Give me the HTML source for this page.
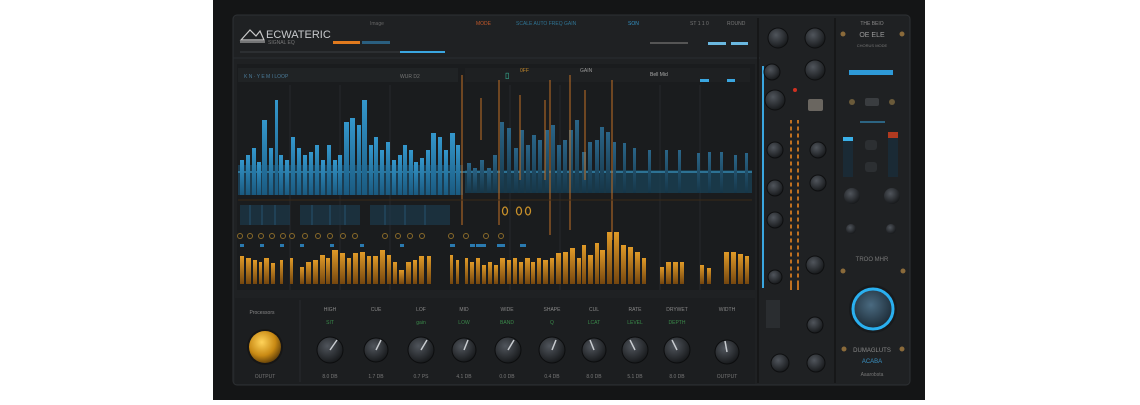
<!DOCTYPE html><html><head><style>body{margin:0;background:#fff;width:1140px;height:400px;overflow:hidden;font-family:"Liberation Sans",sans-serif}</style></head><body>
<svg width="1140" height="400" viewBox="0 0 1140 400" xmlns="http://www.w3.org/2000/svg" font-family="Liberation Sans, sans-serif">
<defs>
<linearGradient id="bl" x1="0" y1="0" x2="0" y2="1"><stop offset="0" stop-color="#3497cc"/><stop offset="1" stop-color="#1a5a80"/></linearGradient>
<linearGradient id="bd" x1="0" y1="0" x2="0" y2="1"><stop offset="0" stop-color="#2a6588"/><stop offset="1" stop-color="#163648"/></linearGradient>
<linearGradient id="or" x1="0" y1="0" x2="0" y2="1"><stop offset="0" stop-color="#e09a28"/><stop offset="1" stop-color="#74460f"/></linearGradient>
<radialGradient id="kn" cx="0.4" cy="0.35" r="0.7"><stop offset="0" stop-color="#50555c"/><stop offset="1" stop-color="#141618"/></radialGradient>
<radialGradient id="gd" cx="0.4" cy="0.35" r="0.7"><stop offset="0" stop-color="#ffd35a"/><stop offset="0.6" stop-color="#c98a14"/><stop offset="1" stop-color="#5a3a08"/></radialGradient>
<radialGradient id="bk" cx="0.45" cy="0.4" r="0.7"><stop offset="0" stop-color="#4a6a80"/><stop offset="1" stop-color="#14202a"/></radialGradient>
</defs>
<rect x="213" y="0" width="712" height="400" fill="#141516"/>
<rect x="233" y="15" width="677" height="370" rx="4" fill="#1f2123" stroke="#2e3134"/>
<line x1="233" y1="58" x2="760" y2="58" stroke="#2a2d30"/>
<line x1="835" y1="18" x2="835" y2="383" stroke="#161718" stroke-width="2"/>
<line x1="758" y1="18" x2="758" y2="383" stroke="#161718" stroke-width="2"/>
<path d="M241 40 L250 30 L256 36 L260 31 L264 40 Z" fill="none" stroke="#c9c9c9" stroke-width="1.2"/>
<line x1="240" y1="42" x2="265" y2="42" stroke="#c9c9c9"/>
<text x="266" y="38" font-size="11" fill="#c7c9cc">ECWATERIC</text>
<text x="268" y="44" font-size="5" fill="#777">SIGNAL EQ</text>
<rect x="333" y="41" width="27" height="3" fill="#e07a1e"/><rect x="362" y="41" width="28" height="3" fill="#2a5f80"/>
<rect x="400" y="51" width="45" height="2" fill="#3aa6e0"/><line x1="240" y1="52" x2="400" y2="52" stroke="#3a3d40"/>
<text x="370" y="25" font-size="5" fill="#666">Image</text><text x="476" y="25" font-size="5" fill="#c0582a">MODE</text>
<text x="516" y="25" font-size="5" fill="#2f7494">SCALE  AUTO  FREQ  GAIN</text><text x="628" y="25" font-size="5" fill="#3495c8">SON</text>
<text x="690" y="25" font-size="5" fill="#777">ST 1 1 0</text><text x="727" y="25" font-size="5" fill="#777">ROUND</text>
<rect x="650" y="42" width="38" height="2" fill="#555"/><rect x="708" y="42" width="18" height="3" fill="#6ab8e0"/><rect x="731" y="42" width="17" height="3" fill="#6ab8e0"/>
<rect x="237" y="64" width="518" height="226" fill="#1a1c1e"/>
<rect x="238" y="68" width="220" height="14" fill="#202325"/><rect x="465" y="68" width="285" height="14" fill="#1e2022"/>
<text x="244" y="78" font-size="5" fill="#4a7a98">K  N  ·  Y  E  M  I  LOOP</text><text x="400" y="78" font-size="5" fill="#777">WUR  D2</text>
<text x="505" y="78" font-size="8" fill="#3ac0a0">▯</text><text x="520" y="72" font-size="5" fill="#c0862a">0FF</text><text x="580" y="72" font-size="5" fill="#999">GAIN</text><text x="650" y="76" font-size="5" fill="#aaa">Bell  Mid</text>
<rect x="700" y="79" width="9" height="3" fill="#3aa6e0"/><rect x="727" y="79" width="8" height="3" fill="#3aa6e0"/>
<g stroke="#26292c"><line x1="290" y1="85" x2="290" y2="290"/><line x1="340" y1="85" x2="340" y2="290"/><line x1="390" y1="85" x2="390" y2="290"/><line x1="510" y1="85" x2="510" y2="290"/><line x1="560" y1="85" x2="560" y2="290"/><line x1="660" y1="85" x2="660" y2="290"/><line x1="700" y1="85" x2="700" y2="290"/></g>
<rect x="238" y="165" width="225" height="30" fill="#1c5474" opacity="0.6"/>
<rect x="465" y="170" width="287" height="23" fill="#19445a" opacity="0.7"/>
<line x1="238" y1="172" x2="752" y2="172" stroke="#40a8d8" stroke-width="1.5" opacity="0.7"/>
<g fill="url(#bl)">
<rect x="240" y="160" width="4" height="35"/><rect x="246" y="155" width="4" height="40"/><rect x="252" y="148" width="4" height="47"/><rect x="257" y="162" width="4" height="33"/><rect x="262" y="120" width="5" height="75"/><rect x="269" y="148" width="4" height="47"/><rect x="275" y="100" width="3" height="95"/><rect x="279" y="155" width="4" height="40"/><rect x="285" y="160" width="4" height="35"/><rect x="291" y="137" width="4" height="58"/><rect x="297" y="148" width="4" height="47"/><rect x="303" y="155" width="4" height="40"/><rect x="309" y="152" width="4" height="43"/><rect x="315" y="145" width="4" height="50"/><rect x="321" y="160" width="4" height="35"/><rect x="327" y="145" width="4" height="50"/><rect x="333" y="160" width="4" height="35"/><rect x="338" y="155" width="4" height="40"/><rect x="344" y="122" width="5" height="73"/><rect x="350" y="118" width="5" height="77"/><rect x="357" y="125" width="4" height="70"/><rect x="362" y="100" width="5" height="95"/><rect x="369" y="145" width="4" height="50"/><rect x="374" y="137" width="4" height="58"/><rect x="380" y="150" width="4" height="45"/><rect x="386" y="142" width="4" height="53"/><rect x="392" y="160" width="4" height="35"/><rect x="398" y="155" width="4" height="40"/><rect x="403" y="145" width="4" height="50"/><rect x="409" y="150" width="4" height="45"/><rect x="414" y="162" width="4" height="33"/><rect x="420" y="158" width="4" height="37"/><rect x="426" y="150" width="4" height="45"/><rect x="431" y="133" width="5" height="62"/><rect x="438" y="137" width="4" height="58"/><rect x="444" y="150" width="4" height="45"/><rect x="450" y="133" width="5" height="62"/><rect x="456" y="145" width="4" height="50"/>
</g>
<g fill="url(#bd)">
<rect x="467" y="163" width="4" height="30"/><rect x="473" y="168" width="4" height="25"/><rect x="480" y="160" width="4" height="33"/><rect x="487" y="168" width="4" height="25"/><rect x="493" y="155" width="4" height="38"/><rect x="500" y="122" width="4" height="71"/><rect x="507" y="128" width="4" height="65"/><rect x="514" y="148" width="4" height="45"/><rect x="520" y="130" width="4" height="63"/><rect x="526" y="145" width="4" height="48"/><rect x="532" y="135" width="4" height="58"/><rect x="538" y="140" width="4" height="53"/><rect x="545" y="130" width="4" height="63"/><rect x="551" y="125" width="4" height="68"/><rect x="557" y="145" width="4" height="48"/><rect x="563" y="140" width="4" height="53"/><rect x="569" y="130" width="4" height="63"/><rect x="575" y="120" width="4" height="73"/><rect x="582" y="152" width="4" height="41"/><rect x="588" y="142" width="4" height="51"/><rect x="595" y="140" width="4" height="53"/><rect x="600" y="127" width="4" height="66"/><rect x="606" y="132" width="4" height="61"/><rect x="613" y="142" width="3" height="51"/><rect x="623" y="143" width="3" height="50"/><rect x="633" y="148" width="3" height="45"/><rect x="648" y="150" width="3" height="43"/><rect x="665" y="150" width="3" height="43"/><rect x="678" y="150" width="3" height="43"/><rect x="697" y="153" width="3" height="40"/><rect x="708" y="152" width="3" height="41"/><rect x="720" y="152" width="3" height="41"/><rect x="734" y="155" width="3" height="38"/><rect x="745" y="153" width="3" height="40"/>
</g>
<g stroke="#c07028" stroke-width="1.2" opacity="0.85"><line x1="462" y1="75" x2="462" y2="225"/><line x1="481" y1="98" x2="481" y2="140"/><line x1="499" y1="80" x2="499" y2="225"/><line x1="520" y1="95" x2="520" y2="180"/><line x1="545" y1="100" x2="545" y2="180"/><line x1="550" y1="80" x2="550" y2="235"/><line x1="570" y1="75" x2="570" y2="230"/><line x1="585" y1="90" x2="585" y2="180"/><line x1="612" y1="80" x2="612" y2="240"/></g>
<line x1="238" y1="200" x2="752" y2="200" stroke="#3a2a18"/>
<g fill="#1c3e52" opacity="0.6"><rect x="240" y="205" width="50" height="20"/><rect x="300" y="205" width="60" height="20"/><rect x="370" y="205" width="80" height="20"/></g>
<g stroke="#2a6a90" opacity="0.6"><line x1="250" y1="205" x2="250" y2="225"/><line x1="262" y1="205" x2="262" y2="225"/><line x1="275" y1="205" x2="275" y2="225"/><line x1="312" y1="205" x2="312" y2="225"/><line x1="330" y1="205" x2="330" y2="225"/><line x1="345" y1="205" x2="345" y2="225"/><line x1="385" y1="205" x2="385" y2="225"/><line x1="405" y1="205" x2="405" y2="225"/><line x1="425" y1="205" x2="425" y2="225"/></g>
<g fill="none" stroke="#c8902a" stroke-width="1.3"><ellipse cx="505" cy="211" rx="2.5" ry="4"/><ellipse cx="519" cy="211" rx="2.5" ry="4"/><ellipse cx="528" cy="211" rx="2.5" ry="4"/></g>
<g fill="none" stroke="#8a6a2a"><circle cx="240" cy="236" r="2.5"/><circle cx="250" cy="236" r="2.5"/><circle cx="261" cy="236" r="2.5"/><circle cx="272" cy="236" r="2.5"/><circle cx="283" cy="236" r="2.5"/><circle cx="292" cy="236" r="2.5"/><circle cx="305" cy="236" r="2.5"/><circle cx="318" cy="236" r="2.5"/><circle cx="330" cy="236" r="2.5"/><circle cx="343" cy="236" r="2.5"/><circle cx="355" cy="236" r="2.5"/><circle cx="385" cy="236" r="2.5"/><circle cx="398" cy="236" r="2.5"/><circle cx="410" cy="236" r="2.5"/><circle cx="422" cy="236" r="2.5"/><circle cx="451" cy="236" r="2.5"/><circle cx="466" cy="236" r="2.5"/><circle cx="486" cy="236" r="2.5"/><circle cx="501" cy="236" r="2.5"/></g>
<g fill="#2a7ab0"><rect x="240" y="244" width="4" height="3"/><rect x="260" y="244" width="4" height="3"/><rect x="280" y="244" width="4" height="3"/><rect x="300" y="244" width="4" height="3"/><rect x="330" y="244" width="4" height="3"/><rect x="360" y="244" width="4" height="3"/><rect x="400" y="244" width="4" height="3"/><rect x="450" y="244" width="5" height="3"/><rect x="470" y="244" width="5" height="3"/><rect x="476" y="244" width="10" height="3"/><rect x="497" y="244" width="8" height="3"/><rect x="520" y="244" width="6" height="3"/></g>
<g fill="url(#or)">
<rect x="240" y="256" width="4" height="28"/><rect x="246" y="258" width="5" height="26"/><rect x="253" y="260" width="4" height="24"/><rect x="259" y="262" width="3" height="22"/><rect x="264" y="258" width="5" height="26"/><rect x="271" y="263" width="4" height="21"/><rect x="280" y="260" width="3" height="24"/><rect x="290" y="258" width="3" height="26"/><rect x="300" y="267" width="4" height="17"/><rect x="306" y="262" width="5" height="22"/><rect x="313" y="260" width="5" height="24"/><rect x="320" y="255" width="5" height="29"/><rect x="326" y="258" width="4" height="26"/><rect x="332" y="250" width="6" height="34"/><rect x="340" y="253" width="5" height="31"/><rect x="347" y="258" width="4" height="26"/><rect x="353" y="253" width="5" height="31"/><rect x="360" y="252" width="5" height="32"/><rect x="367" y="256" width="4" height="28"/><rect x="373" y="256" width="5" height="28"/><rect x="380" y="250" width="5" height="34"/><rect x="387" y="255" width="4" height="29"/><rect x="393" y="262" width="4" height="22"/><rect x="399" y="270" width="5" height="14"/><rect x="406" y="262" width="5" height="22"/><rect x="413" y="260" width="4" height="24"/><rect x="419" y="256" width="5" height="28"/><rect x="427" y="256" width="4" height="28"/><rect x="450" y="255" width="3" height="29"/><rect x="456" y="260" width="3" height="24"/>
<rect x="465" y="258" width="3" height="26"/><rect x="470" y="262" width="4" height="22"/><rect x="476" y="258" width="4" height="26"/><rect x="482" y="265" width="4" height="19"/><rect x="488" y="262" width="4" height="22"/><rect x="494" y="265" width="4" height="19"/><rect x="500" y="258" width="5" height="26"/><rect x="507" y="260" width="4" height="24"/><rect x="513" y="258" width="4" height="26"/><rect x="519" y="262" width="4" height="22"/><rect x="525" y="258" width="5" height="26"/><rect x="531" y="262" width="4" height="22"/><rect x="537" y="258" width="4" height="26"/><rect x="543" y="260" width="5" height="24"/><rect x="550" y="258" width="4" height="26"/><rect x="556" y="253" width="5" height="31"/><rect x="563" y="252" width="5" height="32"/><rect x="570" y="248" width="5" height="36"/><rect x="577" y="258" width="4" height="26"/><rect x="582" y="245" width="4" height="39"/><rect x="588" y="255" width="5" height="29"/><rect x="595" y="243" width="4" height="41"/><rect x="600" y="250" width="5" height="34"/><rect x="607" y="232" width="5" height="52"/><rect x="614" y="232" width="5" height="52"/><rect x="621" y="245" width="5" height="39"/><rect x="628" y="247" width="5" height="37"/><rect x="635" y="252" width="5" height="32"/><rect x="642" y="258" width="4" height="26"/><rect x="660" y="267" width="4" height="17"/><rect x="666" y="262" width="5" height="22"/><rect x="673" y="262" width="5" height="22"/><rect x="680" y="262" width="4" height="22"/><rect x="700" y="265" width="4" height="19"/><rect x="707" y="268" width="4" height="16"/><rect x="724" y="252" width="5" height="32"/><rect x="731" y="252" width="5" height="32"/><rect x="738" y="254" width="5" height="30"/><rect x="745" y="256" width="4" height="28"/>
</g>
<line x1="763" y1="66" x2="763" y2="288" stroke="#3aa6e0" stroke-width="2"/>
<g fill="url(#kn)" stroke="#0e0f10">
<circle cx="778" cy="38" r="10"/><circle cx="815" cy="38" r="10"/><circle cx="815" cy="70" r="10"/><circle cx="775" cy="100" r="10"/><circle cx="775" cy="150" r="8"/><circle cx="818" cy="150" r="8"/><circle cx="775" cy="188" r="8"/><circle cx="818" cy="183" r="8"/><circle cx="775" cy="220" r="8"/><circle cx="815" cy="265" r="9"/><circle cx="775" cy="277" r="7"/><circle cx="815" cy="325" r="8"/><circle cx="780" cy="363" r="9"/><circle cx="816" cy="363" r="9"/><circle cx="772" cy="72" r="8"/>
</g>
<rect x="808" y="99" width="15" height="12" rx="2" fill="#6a6660"/>
<g fill="#c07020"><rect x="790" y="120" width="2" height="170"/><rect x="797" y="120" width="2" height="170"/></g>
<g stroke="#1f2123" stroke-width="3"><line x1="788" y1="125" x2="802" y2="125"/><line x1="788" y1="132" x2="802" y2="132"/><line x1="788" y1="139" x2="802" y2="139"/><line x1="788" y1="146" x2="802" y2="146"/><line x1="788" y1="153" x2="802" y2="153"/><line x1="788" y1="160" x2="802" y2="160"/><line x1="788" y1="167" x2="802" y2="167"/><line x1="788" y1="174" x2="802" y2="174"/><line x1="788" y1="181" x2="802" y2="181"/><line x1="788" y1="188" x2="802" y2="188"/><line x1="788" y1="195" x2="802" y2="195"/><line x1="788" y1="202" x2="802" y2="202"/><line x1="788" y1="209" x2="802" y2="209"/><line x1="788" y1="216" x2="802" y2="216"/><line x1="788" y1="223" x2="802" y2="223"/><line x1="788" y1="230" x2="802" y2="230"/><line x1="788" y1="237" x2="802" y2="237"/><line x1="788" y1="244" x2="802" y2="244"/><line x1="788" y1="251" x2="802" y2="251"/><line x1="788" y1="258" x2="802" y2="258"/><line x1="788" y1="265" x2="802" y2="265"/><line x1="788" y1="272" x2="802" y2="272"/><line x1="788" y1="279" x2="802" y2="279"/></g>
<circle cx="795" cy="90" r="2" fill="#d03020"/>
<rect x="766" y="300" width="14" height="28" fill="#2a2d30"/>
<text x="872" y="25" font-size="5" fill="#888" text-anchor="middle">THE BEIO</text>
<text x="872" y="37" font-size="7" fill="#999" text-anchor="middle">OE ELE</text>
<text x="872" y="47" font-size="4" fill="#777" text-anchor="middle">CHORUS MODE</text>
<g fill="#8a6a3a"><circle cx="843" cy="34" r="2.5"/><circle cx="902" cy="34" r="2.5"/><circle cx="843" cy="271" r="2.5"/><circle cx="903" cy="271" r="2.5"/><circle cx="844" cy="349" r="2.5"/><circle cx="902" cy="349" r="2.5"/></g>
<rect x="849" y="70" width="44" height="5" fill="#2e9ad8"/>
<rect x="865" y="98" width="14" height="8" rx="2" fill="#3a3d40"/>
<circle cx="852" cy="102" r="3" fill="#6a5a3a"/><circle cx="892" cy="102" r="3" fill="#6a5a3a"/>
<line x1="860" y1="122" x2="885" y2="122" stroke="#3aa6e0"/>
<rect x="843" y="137" width="10" height="40" fill="#1a2a35"/><rect x="843" y="137" width="10" height="4" fill="#3ab0e8"/>
<rect x="888" y="132" width="10" height="45" fill="#1a2a35"/><rect x="888" y="132" width="10" height="6" fill="#b03a20"/>
<rect x="865" y="140" width="12" height="10" rx="3" fill="#2c2f32"/><rect x="865" y="162" width="12" height="10" rx="3" fill="#2c2f32"/>
<g fill="url(#kn)"><circle cx="852" cy="196" r="8"/><circle cx="892" cy="196" r="8"/><circle cx="851" cy="229" r="5"/><circle cx="891" cy="229" r="5"/></g>
<text x="872" y="261" font-size="6" fill="#777" text-anchor="middle">TROO  MHR</text>
<circle cx="873" cy="309" r="24" fill="#181a1c"/>
<circle cx="873" cy="309" r="20" fill="url(#bk)" stroke="#2ab0f0" stroke-width="3"/>
<text x="872" y="352" font-size="6" fill="#888" text-anchor="middle">DUMAGLUTS</text>
<text x="872" y="363" font-size="6" fill="#3a90c0" text-anchor="middle">ACABA</text>
<text x="872" y="376" font-size="5" fill="#777" text-anchor="middle">Aaarobsta</text>
<rect x="235" y="298" width="520" height="86" fill="#1c1e20"/>
<line x1="300" y1="300" x2="300" y2="382" stroke="#282b2e"/>
<text x="262" y="314" font-size="5" fill="#888" text-anchor="middle">Processors</text>
<circle cx="265" cy="347" r="18" fill="#161616"/><circle cx="265" cy="347" r="16" fill="url(#gd)"/>
<text x="265" y="378" font-size="5" fill="#777" text-anchor="middle">OUTPUT</text>
<g font-size="5" fill="#888" text-anchor="middle"><text x="330" y="311">HIGH</text><text x="376" y="311">CUE</text><text x="421" y="311">LOF</text><text x="464" y="311">MID</text><text x="507" y="311">WIDE</text><text x="552" y="311">SHAPE</text><text x="594" y="311">CUL</text><text x="635" y="311">RATE</text><text x="677" y="311">DRYWET</text><text x="727" y="311">WIDTH</text></g>
<g font-size="5" fill="#3a8a4a" text-anchor="middle"><text x="330" y="324">SIT</text><text x="421" y="324">gain</text><text x="464" y="324">LOW</text><text x="507" y="324">BAND</text><text x="552" y="324">Q</text><text x="594" y="324">LCAT</text><text x="635" y="324">LEVEL</text><text x="677" y="324">DEPTH</text></g>
<g fill="url(#kn)" stroke="#0c0d0e"><circle cx="330" cy="350" r="13"/><circle cx="376" cy="350" r="12"/><circle cx="421" cy="350" r="13"/><circle cx="464" cy="350" r="12"/><circle cx="508" cy="350" r="13"/><circle cx="552" cy="350" r="13"/><circle cx="594" cy="350" r="12"/><circle cx="635" cy="350" r="13"/><circle cx="677" cy="350" r="13"/><circle cx="727" cy="352" r="12"/></g>
<g stroke="#c8ccd0" stroke-width="1.5"><line x1="330" y1="350" x2="337" y2="340"/><line x1="376" y1="350" x2="381" y2="340"/><line x1="421" y1="350" x2="427" y2="340"/><line x1="464" y1="350" x2="468" y2="340"/><line x1="508" y1="350" x2="514" y2="340"/><line x1="552" y1="350" x2="556" y2="340"/><line x1="594" y1="350" x2="590" y2="340"/><line x1="635" y1="350" x2="630" y2="340"/><line x1="677" y1="350" x2="672" y2="340"/><line x1="727" y1="352" x2="725" y2="341"/></g>
<g font-size="5" fill="#777" text-anchor="middle"><text x="330" y="378">8.0 DB</text><text x="376" y="378">1.7 DB</text><text x="421" y="378">0.7 PS</text><text x="464" y="378">4.1 DB</text><text x="507" y="378">0.0 DB</text><text x="552" y="378">0.4 DB</text><text x="594" y="378">8.0 DB</text><text x="635" y="378">5.1 DB</text><text x="677" y="378">8.0 DB</text><text x="727" y="378">OUTPUT</text></g>
</svg>
</body></html>
